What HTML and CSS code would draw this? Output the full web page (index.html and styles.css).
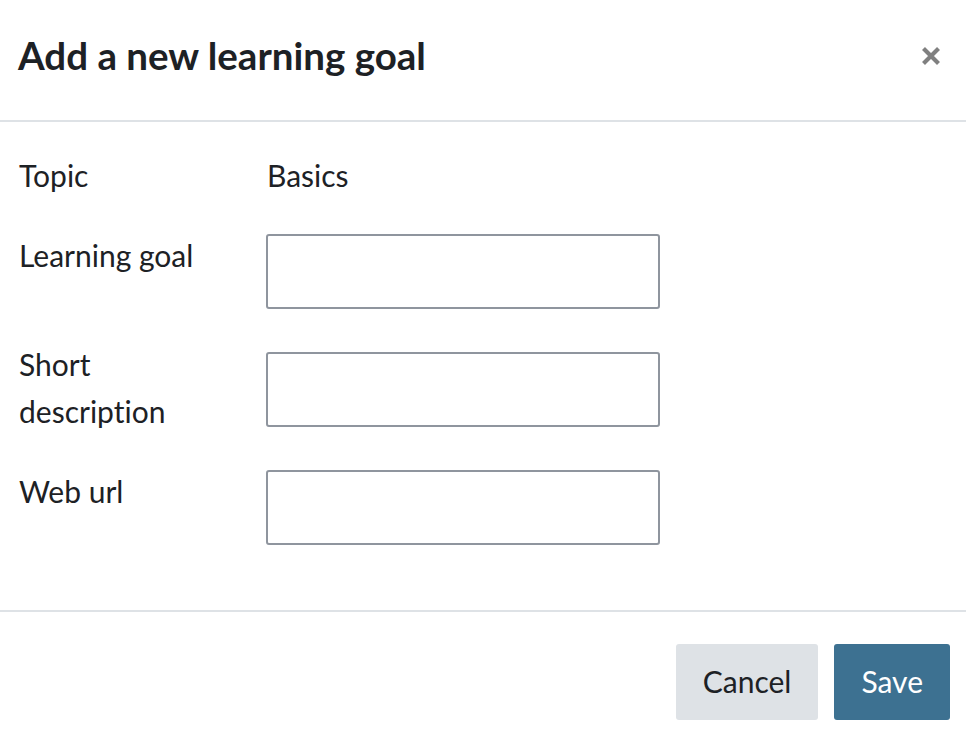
FILE: index.html
```html
<!DOCTYPE html>
<html lang="en">
<head>
<meta charset="utf-8">
<title>Add a new learning goal</title>
<link rel="stylesheet" href="styles.css">
</head>
<body>
<div class="modal">
  <div class="modal-header">
    <h5 class="modal-title">Add a new learning goal</h5>
    <button class="close" type="button" aria-label="Close">
      <svg width="20" height="20" viewBox="0 0 20 20"><path d="M2.5 2.5 L17.5 17.5 M17.5 2.5 L2.5 17.5" stroke="#808080" stroke-width="4.2" stroke-linecap="butt" fill="none"/></svg>
    </button>
  </div>
  <div class="modal-body">
    <div class="form-row static">
      <div class="label">Topic</div>
      <div class="value">Basics</div>
    </div>
    <div class="form-row">
      <label class="label" for="goal">Learning goal</label>
      <input class="form-control" id="goal" type="text">
    </div>
    <div class="form-row">
      <label class="label multiline" for="desc">Short description</label>
      <input class="form-control" id="desc" type="text">
    </div>
    <div class="form-row">
      <label class="label" for="url">Web url</label>
      <input class="form-control" id="url" type="text">
    </div>
  </div>
  <div class="modal-footer">
    <button class="btn btn-secondary" type="button">Cancel</button>
    <button class="btn btn-primary" type="button">Save</button>
  </div>
</div>
</body>
</html>
```

FILE: styles.css
```css
html, body {
  margin: 0;
  padding: 0;
  background: #ffffff;
}

body {
  font-family: Lato, "Liberation Sans", sans-serif;
  font-variant-ligatures: none;
  color: #1d2125;
  font-size: 30px;
  line-height: 47px;
}

.modal {
  width: 966px;
  height: 744px;
  display: flex;
  flex-direction: column;
}

.modal-header {
  display: flex;
  justify-content: space-between;
  align-items: flex-start;
  padding: 33px 25px 43px 18px;
  border-bottom: 2px solid #dee2e6;
  height: 44px;
  flex: none;
}

.modal-title {
  margin: 0;
  font-size: 38.5px;
  line-height: 44px;
  font-weight: 700;
}

.close {
  border: 0;
  background: transparent;
  padding: 0;
  margin-top: 13px;
  width: 20px;
  height: 20px;
  display: flex;
}

.modal-body {
  padding: 30px 0 0 19px;
  flex: 1;
}

.form-row {
  display: grid;
  grid-template-columns: 247px 394px;
  align-items: start;
  min-height: 118px;
}

.form-row.static {
  min-height: 80px;
}

.label {
  display: block;
  padding-right: 40px;
}

.label.multiline {
  margin-top: -9px;
}

.value {
  padding-left: 1px;
}

.form-control {
  margin: 2px 0 0;
  height: 75px;
  box-sizing: border-box;
  border: 2px solid #8f959e;
  border-radius: 3px;
  background: #fff;
  font: inherit;
  padding: 0 14px;
}

.modal-footer {
  flex: none;
  border-top: 2px solid #dee2e6;
  display: flex;
  justify-content: flex-end;
  gap: 16px;
  padding: 32px 16px 24px 0;
}

.btn {
  height: 76px;
  border: 0;
  border-radius: 3px;
  font: inherit;
  font-variant-ligatures: none;
  padding: 0 27px 2px;
}

.btn-secondary {
  background: #dee2e6;
  color: #1d2125;
}

.btn-primary {
  background: #3d7191;
  color: #ffffff;
}
```
